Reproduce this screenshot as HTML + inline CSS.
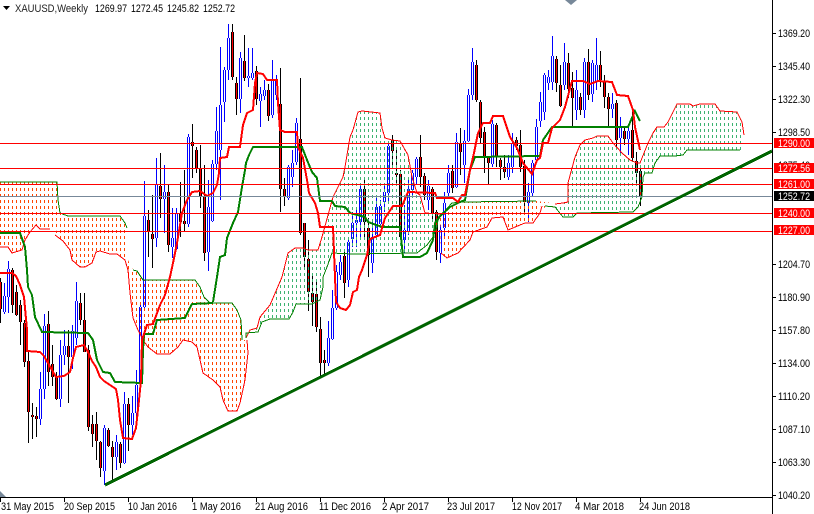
<!DOCTYPE html>
<html><head><meta charset="utf-8"><title>XAUUSD,Weekly</title>
<style>
html,body{margin:0;padding:0;background:#fff;width:814px;height:514px;overflow:hidden}
svg{display:block}
text{font-family:"Liberation Sans",sans-serif;font-size:11px;fill:#000}
.w text{fill:#fff}
</style></head><body>
<svg width="814" height="514" viewBox="0 0 814 514" xmlns="http://www.w3.org/2000/svg">
<defs>
<pattern id="po" width="4" height="6" patternUnits="userSpaceOnUse"><rect x="0" y="2" width="1" height="3" fill="#ff4500" shape-rendering="crispEdges"/></pattern>
<pattern id="pg" width="4" height="6" patternUnits="userSpaceOnUse"><rect x="0" y="3" width="1" height="3" fill="#3cb371" shape-rendering="crispEdges"/></pattern>
<path id="ub" d="M4.5 296V312M8.5 269V297M40.5 389V419M44.5 326V389M60.5 355V399M64.5 346V355M72.5 331V357M76.5 301V338M104.5 428V471M116.5 442V457M124.5 404V463M132.5 413V425M136.5 385V413M140.5 307V383M144.5 216V307M156.5 185V238M164.5 192V199M172.5 238V247M176.5 213V249M188.5 137V224M208.5 207V252M212.5 164V221M216.5 131V164M220.5 105V150M224.5 70V102M228.5 38V70M240.5 58V99M248.5 76V78M252.5 73V78M260.5 94V101M264.5 90V96M272.5 80V115M276.5 80V95M288.5 167V198M292.5 163V177M296.5 123V162M328.5 338V363M332.5 308V339M336.5 272V308M340.5 262V275M348.5 242V280M352.5 223V239M356.5 220V223M360.5 189V222M372.5 237V263M376.5 207V235M380.5 206V224M384.5 192V202M388.5 146V193M404.5 230V240M408.5 189V232M412.5 173V190M416.5 159V177M428.5 186V200M440.5 230V253M444.5 203V228M448.5 173V193M456.5 142V187M464.5 141V165M468.5 95V141M472.5 62V95M492.5 124V164M508.5 163V177M512.5 144V167M528.5 192V203M532.5 163V193M536.5 127V160M540.5 102V121M544.5 75V112M548.5 77V83M552.5 56V82M564.5 62V85M576.5 90V110M584.5 62V110M592.5 63V94M596.5 65V81M612.5 104V109M620.5 127V138M628.5 131V139"/>
<path id="db" d="M0.5 282V309M12.5 270V305M16.5 292V315M20.5 305V322M24.5 323V362M28.5 361V412M32.5 415V417M36.5 416V419M48.5 324V372M52.5 364V377M56.5 377V399M68.5 346V357M80.5 303V320M84.5 320V352M88.5 350V427M92.5 424V434M96.5 424V441M100.5 442V468M108.5 430V446M112.5 447V457M120.5 444V463M128.5 404V425M148.5 220V231M152.5 234V239M160.5 186V199M168.5 192V245M180.5 213V222M184.5 221V224M192.5 142V146M196.5 150V168M200.5 168V197M204.5 197V253M232.5 32V77M236.5 83V99M244.5 61V78M256.5 71V99M268.5 90V116M280.5 104V189M284.5 189V197M300.5 139V233M304.5 223V257M308.5 259V292M312.5 293V302M316.5 294V327M320.5 329V363M324.5 360V363M344.5 256V283M364.5 189V222M368.5 228V255M392.5 140V151M396.5 173V175M400.5 174V237M420.5 157V177M424.5 176V195M432.5 189V213M436.5 212V252M452.5 171V188M460.5 143V152M476.5 65V100M480.5 102V138M484.5 132V157M488.5 158V163M496.5 125V157M500.5 160V167M504.5 167V172M516.5 140V146M520.5 145V167M524.5 166V202M556.5 59V83M560.5 85V106M568.5 63V89M572.5 88V98M580.5 97V110M588.5 62V95M600.5 65V80M604.5 81V97M608.5 97V109M616.5 103V140M624.5 131V139M632.5 130V158M636.5 161V173M640.5 171V196"/>
</defs>

<g shape-rendering="crispEdges" fill="none">
<!-- candles -->
<path stroke="#00f" d="M4.5 283V314M8.5 261V313M40.5 372V425M44.5 314V399M60.5 340V407M64.5 330V365M72.5 325V369M76.5 282V345M104.5 425V485M116.5 435V470M124.5 392V464M132.5 396V435M136.5 370V423M140.5 305V385M144.5 181V310M156.5 158V247M164.5 165V233M172.5 208V258M176.5 208V250M188.5 134V227M208.5 180V271M212.5 160V222M216.5 107V170M220.5 47V200M224.5 67V122M228.5 24V80M240.5 52V113M248.5 48V87M252.5 48V80M260.5 87V127M264.5 80V100M272.5 60V118M276.5 75V100M288.5 165V200M292.5 150V187M296.5 118V165M328.5 321V366M332.5 290V340M336.5 265V310M340.5 255V280M348.5 237V287M352.5 212V247M356.5 207V247M360.5 183V239M372.5 222V273M376.5 197V238M380.5 200V227M384.5 183V212M388.5 143V202M404.5 205V253M408.5 180V235M412.5 170V195M416.5 157V185M428.5 180V210M440.5 225V263M444.5 192V238M448.5 165V198M456.5 133V188M464.5 130V183M468.5 89V142M472.5 48V100M492.5 120V167M508.5 155V180M512.5 133V173M528.5 183V222M532.5 160V197M536.5 119V162M540.5 92V127M544.5 73V120M548.5 70V90M552.5 36V90M564.5 43V90M576.5 70V120M584.5 58V118M592.5 60V102M596.5 38V90M612.5 93V118M620.5 117V155M628.5 128V155"/>
<path stroke="#000" d="M0.5 278V323M12.5 268V313M16.5 285V316M20.5 300V345M24.5 320V367M28.5 350V443M32.5 403V439M36.5 407V437M48.5 311V386M52.5 345V386M56.5 372V400M68.5 330V403M80.5 293V325M84.5 293V352M88.5 345V431M92.5 415V447M96.5 412V460M100.5 441V477M108.5 428V447M112.5 441V483M120.5 442V468M128.5 398V451M148.5 210V257M152.5 195V268M160.5 153V218M168.5 185V252M180.5 182V237M184.5 170V231M192.5 124V178M196.5 147V173M200.5 145V208M204.5 165V261M232.5 24V80M236.5 77V115M244.5 35V81M256.5 66V105M268.5 84V121M280.5 68V212M284.5 178V206M300.5 78V235M304.5 223V270M308.5 240V311M312.5 273V326M316.5 280V332M320.5 317V377M324.5 350V375M344.5 250V298M364.5 180V240M368.5 218V277M392.5 135V165M396.5 150V183M400.5 170V240M420.5 135V187M424.5 173V200M432.5 187V222M436.5 210V260M452.5 165V193M460.5 128V175M476.5 60V102M480.5 100V143M484.5 127V173M488.5 157V184M496.5 123V167M500.5 158V180M504.5 155V178M516.5 137V150M520.5 130V172M524.5 160V212M556.5 56V92M560.5 65V107M568.5 53V98M572.5 72V127M580.5 93V115M588.5 49V100M600.5 51V87M604.5 75V108M608.5 93V127M616.5 100V149M624.5 127V145M632.5 107V162M636.5 152V183M640.5 168V206"/>
<use href="#ub" stroke="#00f" stroke-width="3"/>
<use href="#ub" stroke="#fff" stroke-width="1"/>
<use href="#db" stroke="#000" stroke-width="3"/>
<use href="#db" stroke="#f00" stroke-width="1"/>

<!-- clouds -->
<polygon fill="url(#po)" points="0,182 57,182 58,200 60,213 68,216 120,216 125,223 127,228 128,260 133,270 137,271 143,280 195,280 200,287 204,297 210,303 232,303 237,310 241,320 242,340 247,340 248,353 245,380 240,403 237,411 228,411 223,400 220,387 213,380 203,373 200,360 197,347 192,342 183,340 178,347 170,354 157,354 148,347 143,340 138,330 133,318 130,293 128,270 125,260 117,254 110,254 100,251 96,252 92,263 85,267 80,267 72,260 70,250 63,241 55,235 57,230 50,229 40,229 36,225 30,232 25,240 22,250 12,253 8,247 0,247"/>
<polygon fill="url(#pg)" points="246,338 250,330 257,328 260,317 270,305 282,277 288,253 295,248 303,248 308,250 318,250 322,237 333,197 343,177 345,167 350,137 353,130 358,112 362,111 380,113 382,128 385,138 392,140 400,141 408,155 412,177 417,193 420,195 425,213 440,214 438,220 437,227 433,237 427,245 417,253 407,254 352,254 332,253 327,267 323,277 323,287 320,300 312,304 296,304 293,312 289,319 270,319 262,322 258,332 246,333"/>
<polygon fill="url(#po)" points="440,214 443,213 452,203 463,202 536,201 552,203 556,205 555,207 550,206 545,208 540,206 538,213 533,223 525,223 520,225 508,230 503,217 492,218 487,227 473,232 470,240 458,253 447,258 441,253"/>
<polygon fill="url(#pg)" points="555,204 563,203 568,202 568,183 575,157 580,145 585,140 593,138 597,136 608,136 613,143 622,153 630,160 637,163 640,163 648,143 653,133 657,127 664,127 668,122 677,104 690,104 693,106 700,104 715,104 720,111 737,112 742,122 744,135 744,150 720,150 687,150 683,155 675,156 660,156 655,163 652,173 645,173 643,177 642,197 638,207 633,212 577,213 573,217 563,217 555,207"/>

<!-- cloud edges -->
<polyline stroke="#008000" points="0,182 57,182 58,200 60,213 68,216 120,216 125,223 127,228"/>
<polyline stroke="#008000" points="133,270 137,271 143,280 195,280 200,287 204,297 210,303 232,303 237,310 241,320 242,340"/>
<polyline stroke="#f00" points="0,247 8,247 12,253 22,250 25,240 30,232 36,225 40,229 50,229"/>
<polyline stroke="#f00" points="55,235 63,241 70,250 72,260 80,267 85,267 92,263 96,252 100,251 110,254 117,254 125,260 128,270 130,293 133,318 138,330 143,340 148,347 157,354 170,354 178,347 183,340 192,342 197,347 200,360 203,373 213,380 220,387 223,400 228,411 237,411 240,403 245,380 248,353 247,340"/>
<polyline stroke="#f00" points="246,338 250,330 257,328 260,317 270,305 282,277 288,253 295,248 303,248 308,250 318,250 322,237 333,197 343,177 345,167 350,137 353,130 358,112 362,111 380,113 382,128 385,138 392,140 400,141 408,155 412,177 417,193 420,195 425,213 440,214"/>
<polyline stroke="#008000" points="246,338 246,333 258,332 262,322 270,319 289,319 293,312 296,304 312,304 320,300 323,287 323,277 327,267 332,253 352,254 417,253 427,245 433,237 437,227 438,220 443,213 452,203 463,202 536,201"/>
<polyline stroke="#f00" points="441,253 447,258 458,253 470,240 473,232 487,227 492,218 503,217 508,230 520,225 525,223 533,223 540,213 542,206"/>
<polyline stroke="#f00" points="555,204 563,203 568,202 568,183 575,157 580,145 585,140 593,138 597,136 608,136 613,143 622,153 630,160 637,163 640,163 648,143 653,133 657,127 664,127 668,122 677,104 690,104 693,106 700,104 715,104 720,111 737,112 742,122 744,135"/>
<polyline stroke="#008000" points="545,206 555,207 563,217 573,217 577,213 633,212 638,207 642,197 643,177 645,173 652,173 655,163 660,156 675,156 683,155 687,150 720,150 740,150"/>

<!-- Kijun -->
<polyline stroke="#008000" stroke-width="2" points="0,233 20,233 25,247 27,270 28,287 32,295 35,317 42,332 88,333 93,340 97,360 103,372 110,373 115,382 142,383 143,350 144,334 153,334 157,320 185,318 192,304 213,303"/>
<polyline stroke="#008000" stroke-width="2" points="213,302 217,277 220,257 225,255 227,238 233,223 238,212 242,187 245,170 246,163 249,155 253,147 302,147 307,160 312,172 317,178 320,201 332,201 335,206 345,207 350,213 365,217 368,222 382,227 400,227 403,257 420,257 427,253 433,240 435,223 440,216 450,207 460,202 465,200 470,170 475,157 540,156 543,140 552,127 628,127 635,111 640,121"/>
<!-- Tenkan -->
<polyline stroke="#f00" stroke-width="2" points="0,273 12,273 16,276 20,285 24,297 27,330 27,351 40,352 44,356 48,363 52,370 56,377 64,376 70,372 73,358 76,347 84,345 88,352 92,361 96,367 100,377 104,381 110,385 116,389 118,400 120,420 123,438 132,439 136,428 139,400 141,380 142,340 147,325 153,324 160,305 165,295 170,277 173,263 177,243 182,213 187,200 192,192 200,191 207,196 213,193 217,185 219,173 220,158 227,157 229,147 240,147 243,125 247,113 253,110 255,83 257,73 263,74 267,80 277,80 278,103 280,130 285,132 297,132 298,147 303,158 307,180 309,193 315,203 318,213 320,227 333,227 335,277 336,302 340,308 346,310 350,305 353,292 357,290 359,277 362,270 367,255 370,239 380,235 385,218 393,206 402,206 408,192 435,193 437,198 453,198 458,202 462,195 465,195 470,170 474,153 478,133 483,123 490,123 493,116 503,116 510,137 517,148 523,163 532,174 537,160 540,158 543,143 548,143 552,128 560,120 565,107 572,81 583,81 590,84 598,81 612,82 617,95 628,96 633,110 635,127 640,150"/>
</g>

<g shape-rendering="crispEdges">
<!-- horizontal levels -->
<rect x="0" y="143" width="772" height="1" fill="#f00"/>
<rect x="0" y="168" width="772" height="1" fill="#f00"/>
<rect x="0" y="184" width="772" height="1" fill="#f00"/>
<rect x="0" y="196" width="772" height="1" fill="#778899"/>
<rect x="0" y="213" width="772" height="1" fill="#f00"/>
<rect x="0" y="231" width="772" height="1" fill="#f00"/>
<!-- trendline -->
<line x1="105" y1="485" x2="772" y2="151" stroke="#006400" stroke-width="3"/>
<!-- axes -->
<rect x="772" y="0" width="1" height="514" fill="#000"/>
<rect x="0" y="497" width="773" height="1" fill="#000"/>
<path fill="#000" d="M0 498h1v4H0zM64 498h1v4h-1zM128 498h1v4h-1zM192 498h1v4h-1zM256 498h1v4h-1zM320 498h1v4h-1zM384 498h1v4h-1zM448 498h1v4h-1zM512 498h1v4h-1zM576 498h1v4h-1zM640 498h1v4h-1z"/>
<path fill="#000" d="M773 33h3v1h-3zM773 66h3v1h-3zM773 99h3v1h-3zM773 132h3v1h-3zM773 264h3v1h-3zM773 297h3v1h-3zM773 330h3v1h-3zM773 363h3v1h-3zM773 396h3v1h-3zM773 429h3v1h-3zM773 462h3v1h-3zM773 495h3v1h-3z"/>
<!-- corner marks -->
<polygon points="565,0 577,0 571,5" fill="#778899" shape-rendering="auto"/>
<polygon points="0,491 6,497 0,497" fill="#778899" shape-rendering="auto"/>
<polygon points="3,6 10,6 6.5,10" fill="#000" shape-rendering="auto"/>
</g>

<!-- header -->
<text x="15" y="12" textLength="73" lengthAdjust="spacingAndGlyphs" style="fill:#222">XAUUSD,Weekly</text>
<text x="95" y="12" textLength="32" lengthAdjust="spacingAndGlyphs">1269.97</text>
<text x="131" y="12" textLength="32" lengthAdjust="spacingAndGlyphs">1272.45</text>
<text x="167" y="12" textLength="32" lengthAdjust="spacingAndGlyphs">1245.82</text>
<text x="203" y="12" textLength="32" lengthAdjust="spacingAndGlyphs">1252.72</text>

<!-- price axis -->
<g>
<text x="778" y="37" textLength="32" lengthAdjust="spacingAndGlyphs">1369.20</text>
<text x="778" y="70" textLength="32" lengthAdjust="spacingAndGlyphs">1345.40</text>
<text x="778" y="103" textLength="32" lengthAdjust="spacingAndGlyphs">1322.30</text>
<text x="778" y="136" textLength="32" lengthAdjust="spacingAndGlyphs">1298.50</text>
<text x="778" y="169" textLength="32" lengthAdjust="spacingAndGlyphs">1275.40</text>
<text x="778" y="268" textLength="32" lengthAdjust="spacingAndGlyphs">1204.70</text>
<text x="778" y="301" textLength="32" lengthAdjust="spacingAndGlyphs">1180.90</text>
<text x="778" y="334" textLength="32" lengthAdjust="spacingAndGlyphs">1157.80</text>
<text x="778" y="367" textLength="32" lengthAdjust="spacingAndGlyphs">1134.00</text>
<text x="778" y="400" textLength="32" lengthAdjust="spacingAndGlyphs">1110.20</text>
<text x="778" y="433" textLength="32" lengthAdjust="spacingAndGlyphs">1087.10</text>
<text x="778" y="466" textLength="32" lengthAdjust="spacingAndGlyphs">1063.30</text>
<text x="778" y="499" textLength="32" lengthAdjust="spacingAndGlyphs">1040.20</text>
</g>
<g shape-rendering="crispEdges">
<rect x="774" y="138" width="40" height="10" fill="#f00"/>
<rect x="774" y="163" width="40" height="10" fill="#f00"/>
<rect x="774" y="179" width="40" height="10" fill="#f00"/>
<rect x="774" y="191" width="40" height="10" fill="#000"/>
<rect x="774" y="208" width="40" height="10" fill="#f00"/>
<rect x="774" y="225" width="40" height="10" fill="#f00"/>
</g>
<g class="w">
<text x="778" y="147" textLength="32" lengthAdjust="spacingAndGlyphs">1290.00</text>
<text x="778" y="172" textLength="32" lengthAdjust="spacingAndGlyphs">1272.56</text>
<text x="778" y="188" textLength="32" lengthAdjust="spacingAndGlyphs">1261.00</text>
<text x="778" y="200" textLength="32" lengthAdjust="spacingAndGlyphs">1252.72</text>
<text x="778" y="217" textLength="32" lengthAdjust="spacingAndGlyphs">1240.00</text>
<text x="778" y="234" textLength="32" lengthAdjust="spacingAndGlyphs">1227.00</text>
</g>

<!-- time axis -->
<text x="1" y="510" textLength="53" lengthAdjust="spacingAndGlyphs">31 May 2015</text>
<text x="64" y="510" textLength="51" lengthAdjust="spacingAndGlyphs">20 Sep 2015</text>
<text x="128" y="510" textLength="49" lengthAdjust="spacingAndGlyphs">10 Jan 2016</text>
<text x="192" y="510" textLength="49" lengthAdjust="spacingAndGlyphs">1 May 2016</text>
<text x="255" y="510" textLength="53" lengthAdjust="spacingAndGlyphs">21 Aug 2016</text>
<text x="319" y="510" textLength="52" lengthAdjust="spacingAndGlyphs">11 Dec 2016</text>
<text x="382" y="510" textLength="47" lengthAdjust="spacingAndGlyphs">2 Apr 2017</text>
<text x="447" y="510" textLength="48" lengthAdjust="spacingAndGlyphs">23 Jul 2017</text>
<text x="512" y="510" textLength="50" lengthAdjust="spacingAndGlyphs">12 Nov 2017</text>
<text x="575" y="510" textLength="49" lengthAdjust="spacingAndGlyphs">4 Mar 2018</text>
<text x="639" y="510" textLength="51" lengthAdjust="spacingAndGlyphs">24 Jun 2018</text>
</svg>
</body></html>
